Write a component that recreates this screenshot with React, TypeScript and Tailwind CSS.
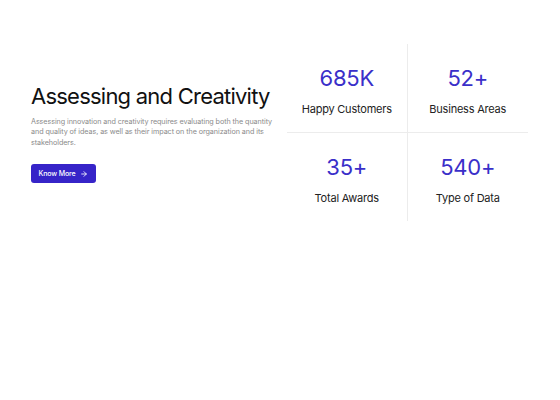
import { ArrowRight } from "lucide-react";

const STATS = [
  { valor: "685K", label: "Happy Customers", borde: "border-r border-b" },
  { valor: "52+", label: "Business Areas", borde: "border-b" },
  { valor: "35+", label: "Total Awards", borde: "border-r" },
  { valor: "540+", label: "Type of Data", borde: "" },
];

export default function App() {
  return (
    <div
      className="w-[560px] h-[400px] bg-white pt-[44px] pl-[31px] pr-[32px]"
      style={{ fontFamily: "Inter, 'Noto Sans', sans-serif" }}
    >
      <div className="flex items-center gap-[8px]">
        <div className="w-[246px] shrink-0">
          <h1 className="text-[22px] leading-[28px] font-normal tracking-[-0.035em] text-[#111] whitespace-nowrap">
            Assessing and Creativity
          </h1>
          <p className="mt-[7px] text-[7.2px] leading-[10.5px] text-[#8a8a8a] tracking-[-0.01em]">
            Assessing innovation and creativity requires evaluating both the quantity and
            quality of ideas, as well as their impact on the organization and its stakeholders.
          </p>
          <button className="mt-[16px] flex items-center gap-[5px] h-[19px] w-[65px] justify-center rounded-[3px] bg-[#3624c8] text-white text-[7px] font-medium tracking-[-0.02em]">
            Know More
            <ArrowRight size={8} strokeWidth={2.5} />
          </button>
        </div>

        <div className="grid grid-cols-2 w-[241px] ml-auto">
          {STATS.map((s) => (
            <div
              key={s.label}
              className={`h-[88.5px] pt-[5px] flex flex-col items-center justify-center border-[#ececec] ${s.borde}`}
            >
              <span className="text-[22px] leading-[26px] text-[#3a2fc9] tracking-[-0.01em]">
                {s.valor}
              </span>
              <span className="mt-[11px] text-[11px] leading-[14px] text-[#222] tracking-[-0.02em]">
                {s.label}
              </span>
            </div>
          ))}
        </div>
      </div>
    </div>
  );
}
